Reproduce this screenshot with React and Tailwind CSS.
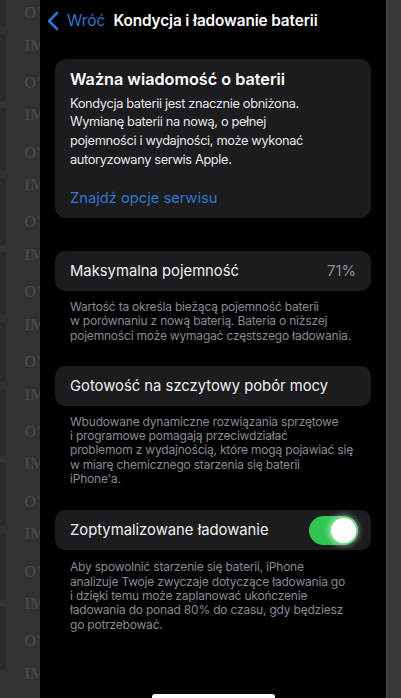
import React from "react";

const font = { fontFamily: "Inter, 'Noto Sans', sans-serif" };

function LeftStrip() {
  const bars = [
    [0, 27], [33, 67], [110, 63], [180, 67], [257, 63], [330, 60], [400, 67], [477, 63], [550, 67], [627, 63],
  ];
  const items = [];
  for (let i = 0; i < 10; i++) {
    items.push(
      <div key={"o" + i} className="h-[34px] leading-[26px] text-[16px]">O'</div>
    );
    items.push(
      <div key={"i" + i} className="h-[39px] leading-[26px] text-[16px]">IM</div>
    );
  }
  return (
    <div className="w-[40px] h-full bg-[#323232] flex flex-row overflow-hidden shrink-0">
      <div className="w-[6px] flex flex-col gap-[7px] shrink-0">
        {bars.map((b, i) => (
          <div key={i} className="w-[6px] rounded-r-[3px] bg-[#2a2a2a] shrink-0" style={{ height: b[1] }} />
        ))}
      </div>
      <div
        className="flex flex-col pl-[18px] text-[#464646] font-bold whitespace-nowrap"
        style={{ fontFamily: "'Liberation Serif', serif" }}
      >
        {items}
      </div>
    </div>
  );
}

function Chevron() {
  return (
    <svg width="12" height="20" viewBox="0 0 12 20" className="shrink-0">
      <polyline points="10,2 2,10 10,18" fill="none" stroke="#2f76d2" strokeWidth="2.6" strokeLinecap="round" strokeLinejoin="round" />
    </svg>
  );
}

function Desc({ lines, pt }) {
  return (
    <div className={"px-[15px] text-[12px] leading-[14.3px] tracking-[-0.2px] text-[#8b8b90] whitespace-nowrap " + pt}>
      {lines.map((l, i) => (
        <div key={i}>{l}</div>
      ))}
    </div>
  );
}

export default function App() {
  return (
    <div className="w-[401px] h-[698px] flex flex-row overflow-hidden bg-black" style={font}>
      <LeftStrip />
      <div className="w-[346px] min-w-0 shrink-0 h-full bg-black flex flex-col px-[15px] overflow-hidden">
        <div className="h-[42px] flex items-center -ml-[8px] gap-[8px]">
          <Chevron />
          <div className="flex items-center gap-[8px] whitespace-nowrap">
            <span className="text-[15.5px] text-[#2f76d2]">Wróć</span>
            <span className="text-[15.3px] font-semibold text-white tracking-[-0.1px]">Kondycja i ładowanie baterii</span>
          </div>
        </div>

        <div className="mt-[17px] h-[159px] rounded-[11px] bg-[#1c1c1e] px-[15px] pt-[10px] flex flex-col">
          <div className="text-[16.2px] leading-[20px] font-semibold text-white whitespace-nowrap">Ważna wiadomość o baterii</div>
          <div className="mt-[5.5px] text-[12.8px] leading-[18.7px] tracking-[-0.35px] text-[#e6e6e8] whitespace-nowrap">
            <div>Kondycja baterii jest znacznie obniżona.</div>
            <div>Wymianę baterii na nową, o pełnej</div>
            <div>pojemności i wydajności, może wykonać</div>
            <div>autoryzowany serwis Apple.</div>
          </div>
          <div className="mt-[19px] text-[14.7px] leading-[20px] text-[#2f76d2]">Znajdź opcje serwisu</div>
        </div>

        <div className="mt-[33px] h-[40px] rounded-[10px] bg-[#1c1c1e] px-[15px] flex items-center justify-between">
          <span className="text-[14.8px] text-[#f0f0f2]">Maksymalna pojemność</span>
          <span className="text-[14.8px] text-[#8e8e93]">71%</span>
        </div>
        <Desc
          pt="pt-[9px]"
          lines={[
            "Wartość ta określa bieżącą pojemność baterii",
            "w porównaniu z nową baterią. Bateria o niższej",
            "pojemności może wymagać częstszego ładowania.",
          ]}
        />

        <div className="mt-[23px] h-[40px] rounded-[10px] bg-[#1c1c1e] px-[15px] flex items-center">
          <span className="text-[14.8px] text-[#f0f0f2]">Gotowość na szczytowy pobór mocy</span>
        </div>
        <Desc
          pt="pt-[9px]"
          lines={[
            "Wbudowane dynamiczne rozwiązania sprzętowe",
            "i programowe pomagają przeciwdziałać",
            "problemom z wydajnością, które mogą pojawiać się",
            "w miarę chemicznego starzenia się baterii",
            "iPhone'a.",
          ]}
        />

        <div className="mt-[24px] h-[40px] rounded-[10px] bg-[#1c1c1e] pl-[15px] pr-[13px] flex items-center justify-between">
          <span className="text-[14.8px] text-[#f0f0f2]">Zoptymalizowane ładowanie</span>
          <div className="w-[49px] h-[29px] rounded-full bg-[#31c452] flex items-center justify-end pr-[2px]">
            <div className="w-[25px] h-[25px] rounded-full bg-white shadow-[0_0_6px_2px_rgba(220,255,230,0.7)]" />
          </div>
        </div>
        <Desc
          pt="pt-[10px]"
          lines={[
            "Aby spowolnić starzenie się baterii, iPhone",
            "analizuje Twoje zwyczaje dotyczące ładowania go",
            "i dzięki temu może zaplanować ukończenie",
            "ładowania do ponad 80% do czasu, gdy będziesz",
            "go potrzebować.",
          ]}
        />

        <div className="mt-auto flex justify-center">
          <div className="w-[123px] h-[4px] rounded-t-[3px] bg-white" />
        </div>
      </div>
      <div className="w-[15px] h-full bg-[#3a3735] shrink-0 border-l-[2px] border-[#423f3d]" />
    </div>
  );
}
